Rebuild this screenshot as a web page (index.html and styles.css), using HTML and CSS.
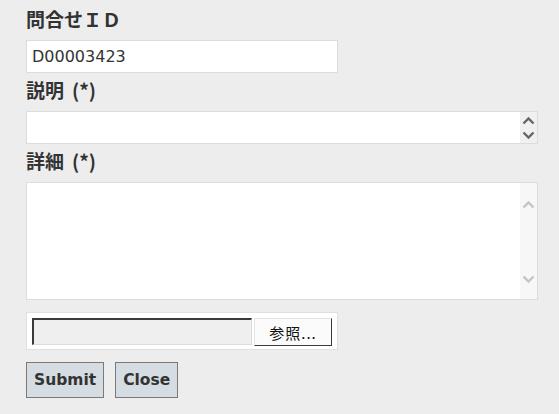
FILE: index.html
```html
<!DOCTYPE html>
<html lang="ja">
<head>
<meta charset="utf-8">
<title>問合せ</title>
<link rel="stylesheet" href="styles.css">
</head>
<body>
<form class="form">
  <div class="label first">問合せＩＤ</div>
  <div class="box idbox"><span class="val">D00003423</span></div>

  <div class="label">説明<span class="req">(*)</span></div>
  <div class="box descbox">
    <div class="area"></div>
    <div class="sbar dark">
      <svg width="13" height="9" viewBox="0 0 13 9"><path d="M1.5 7.5 L6.5 2.5 L11.5 7.5" fill="none" stroke="currentColor" stroke-width="2.4"/></svg>
      <svg width="13" height="9" viewBox="0 0 13 9"><path d="M1.5 1.5 L6.5 6.5 L11.5 1.5" fill="none" stroke="currentColor" stroke-width="2.4"/></svg>
    </div>
  </div>

  <div class="label">詳細<span class="req">(*)</span></div>
  <div class="box detailbox">
    <div class="area"></div>
    <div class="sbar light">
      <svg width="13" height="9" viewBox="0 0 13 9"><path d="M1.5 7.5 L6.5 2.5 L11.5 7.5" fill="none" stroke="currentColor" stroke-width="2.4"/></svg>
      <svg width="13" height="9" viewBox="0 0 13 9"><path d="M1.5 1.5 L6.5 6.5 L11.5 1.5" fill="none" stroke="currentColor" stroke-width="2.4"/></svg>
    </div>
  </div>

  <div class="filebox">
    <div class="filefield"></div>
    <div class="filebtn">参照...</div>
  </div>

  <div class="actions">
    <button type="button" class="btn">Submit</button>
    <button type="button" class="btn">Close</button>
  </div>
</form>
</body>
</html>
```

FILE: styles.css
```css
html, body {
  margin: 0;
  padding: 0;
  background: #ededed;
}

.form {
  padding: 0 0 0 26px;
  font-family: "DejaVu Sans", "Noto Sans CJK JP", sans-serif;
  color: #333;
}

.label {
  box-sizing: border-box;
  height: 38px;
  line-height: 34px;
  padding-bottom: 4px;
  font-family: "Noto Sans CJK JP", sans-serif;
  font-size: 19px;
  font-weight: bold;
  color: #333;
}

.label.first {
  margin-top: 2px;
}

.req {
  margin-left: 8px;
}

.box {
  box-sizing: border-box;
  background: #fff;
  border: 1px solid #dcdcdc;
}

.idbox {
  width: 312px;
  height: 33px;
  display: flex;
  align-items: center;
  padding-left: 5px;
}

.val {
  font-size: 16px;
  color: #333;
}

.descbox {
  width: 512px;
  height: 33px;
  display: flex;
}

.detailbox {
  width: 512px;
  height: 118px;
  display: flex;
}

.area {
  flex: 1;
}

.sbar {
  width: 17px;
  display: flex;
  flex-direction: column;
  align-items: center;
  justify-content: space-between;
}

.sbar.dark {
  background: #f0f0f0;
  color: #666;
  padding: 4px 0 3px;
}

.sbar.light {
  background: #f7f7f7;
  color: #c4c4c4;
  padding: 17px 0 15px;
}

.filebox {
  box-sizing: border-box;
  margin-top: 12px;
  width: 312px;
  height: 38px;
  background: #fff;
  border: 1px solid #e0e0e0;
  display: flex;
  align-items: flex-start;
  padding: 5px 0 0 5px;
  gap: 2px;
}

.filefield {
  box-sizing: border-box;
  width: 220px;
  height: 27px;
  background: #efefef;
  border-top: 2px solid #3a3a3a;
  border-left: 2px solid #3a3a3a;
  border-bottom: 1px solid #dcdcdc;
  border-right: 1px solid #dcdcdc;
}

.filebtn {
  box-sizing: border-box;
  width: 78px;
  height: 28px;
  background: #fbfbfb;
  border-top: 1px solid #e3e3e3;
  border-left: 1px solid #e3e3e3;
  border-right: 1px solid #3a3a3a;
  border-bottom: 1px solid #3a3a3a;
  font-family: "Noto Sans CJK JP", sans-serif;
  font-size: 15px;
  letter-spacing: 1px;
  color: #111;
  display: flex;
  align-items: center;
  justify-content: center;
}

.actions {
  margin-top: 12px;
  display: flex;
  gap: 11px;
}

.btn {
  box-sizing: border-box;
  height: 36px;
  padding: 0 7px;
  background: #d5dde2;
  border: 1px solid #7a7a7a;
  border-radius: 0;
  font-family: "DejaVu Sans", sans-serif;
  font-size: 15.5px;
  font-weight: bold;
  color: #333;
}
```
